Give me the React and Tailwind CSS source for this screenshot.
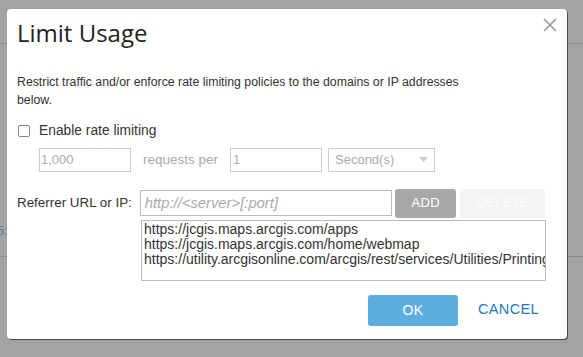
import React from 'react';

const urls = [
  'https://jcgis.maps.arcgis.com/apps',
  'https://jcgis.maps.arcgis.com/home/webmap',
  'https://utility.arcgisonline.com/arcgis/rest/services/Utilities/PrintingTools/GPServer',
];

export default function App() {
  return (
    <div className="relative h-[357px] w-[583px] overflow-hidden bg-[#a3a3a3] font-['Liberation_Sans',sans-serif]">
      {/* page behind the overlay */}
      <div className="h-[44px] border-b border-[#8d8d8d]" />
      <div className="flex h-[213px] items-end border-b border-[#8d8d8d] pb-[19px]">
        <span className="-ml-[3px] text-[13px] leading-none text-[#5c7f99]">5:</span>
      </div>

      {/* dialog */}
      <div className="absolute left-[7px] top-[9px] flex h-[330px] w-[560px] flex-col rounded-[4px] bg-white pl-[10px] pr-[22px] text-[12px] text-[#333] shadow-[1px_1px_0_#4a4a4a]">
        <div className="flex h-[44px] items-center justify-between">
          <h1 className="mt-[4px] font-['Open_Sans',sans-serif] text-[24px] leading-none text-[#222]">Limit Usage</h1>
          <button className="-mr-[12px] mt-[-12px] text-[#999]">
            <svg width="14" height="14" viewBox="0 0 14 14" fill="none" stroke="currentColor" strokeWidth="1.6">
              <path d="M1 1L13 13M13 1L1 13" />
            </svg>
          </button>
        </div>

        <p className="mt-[20px] text-[12.3px] leading-[18px]">
          Restrict traffic and/or enforce rate limiting policies to the domains or IP addresses
          <br />
          below.
        </p>

        <label className="mt-[12px] flex items-center gap-[9px]">
          <span className="ml-[1px] h-[12px] w-[12px] rounded-[2px] border border-[#888] bg-white" />
          <span className="text-[13.8px]">Enable rate limiting</span>
        </label>

        <div className="mt-[6px] flex items-center pl-[22px] text-[13px] text-[#aaa]">
          <div className="flex h-[24px] w-[92px] items-center border border-[#ccc] pl-[1px]">1,000</div>
          <span className="ml-[12px] w-[87px] text-[13.5px]">requests per</span>
          <div className="flex h-[24px] w-[92px] items-center border border-[#ccc] pl-[2px]">1</div>
          <div className="ml-[6px] flex h-[24px] w-[107px] items-center justify-between border border-[#ccc] pl-[6px] pr-[6px]">
            <span>Second(s)</span>
            <svg width="9" height="5" viewBox="0 0 9 5"><path d="M0 0H9L4.5 5Z" fill="#ccc" /></svg>
          </div>
        </div>

        <div className="mt-[17px] flex items-center">
          <span className="w-[123px] text-[13.4px]">Referrer URL or IP:</span>
          <div className="flex h-[26px] w-[253px] items-center border border-[#bbb] pl-[4px] text-[14.8px] italic text-[#aaa]">
            http://&lt;server&gt;[:port]
          </div>
          <button className="ml-[3px] h-[29px] w-[61px] rounded-[3px] bg-[#a8a8a8] text-[13px] tracking-wide text-white">ADD</button>
          <button className="ml-[4px] h-[29px] w-[85px] rounded-[3px] bg-[#f4f4f4] text-[13px] tracking-wide text-[#fcfcfc]">DELETE</button>
        </div>

        <div className="ml-[124px] mt-[2px] h-[61px] w-[405px] overflow-hidden whitespace-nowrap border border-[#bbb] pl-[2px] pt-[1px] text-[14px] leading-[15px]">
          {urls.map((u) => (
            <div key={u}>{u}</div>
          ))}
        </div>

        <div className="mt-[14px] flex items-center justify-end gap-[20px]">
          <button className="h-[31px] w-[90px] rounded-[3px] bg-[#5dade0] text-[14px] tracking-wide text-white">OK</button>
          <button className="mr-[6px] text-[14.5px] tracking-wide text-[#1c79c4]">CANCEL</button>
        </div>
      </div>
    </div>
  );
}
